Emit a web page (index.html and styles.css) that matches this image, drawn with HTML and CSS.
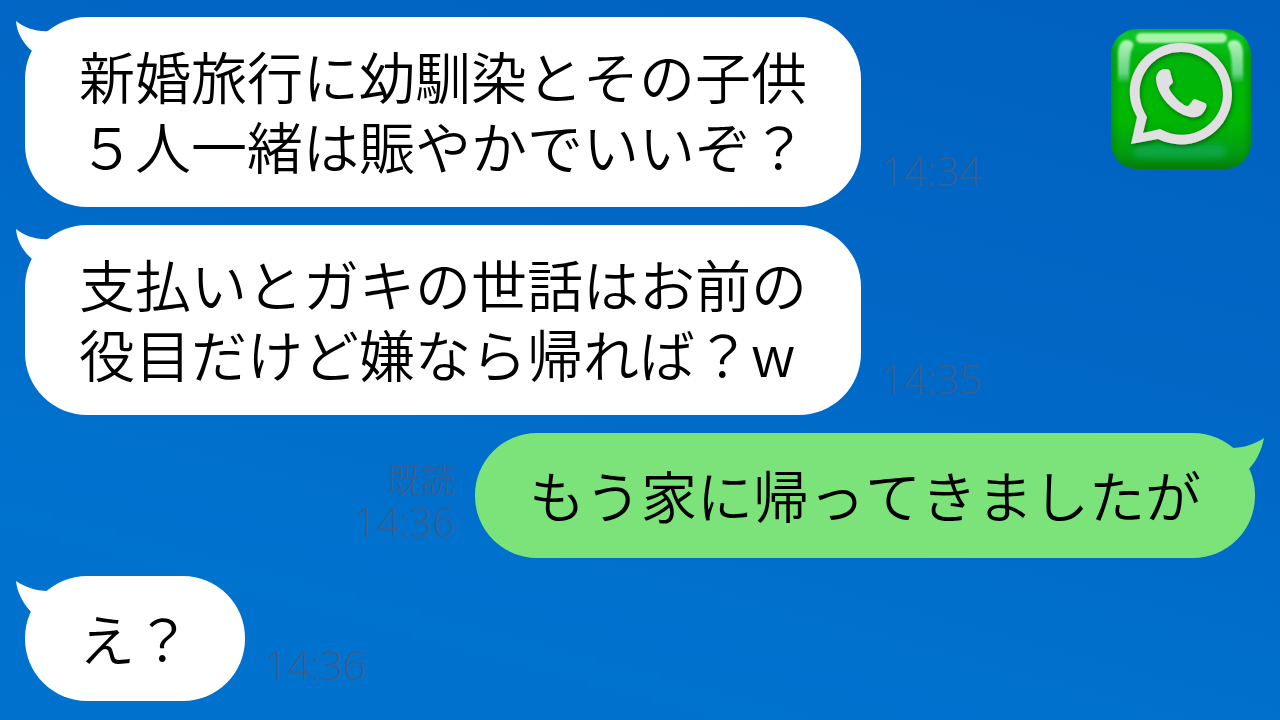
FILE: index.html
```html
<!DOCTYPE html>
<html lang="ja">
<head>
<meta charset="utf-8">
<meta name="viewport" content="width=device-width, initial-scale=1">
<title>トーク</title>
<link rel="stylesheet" href="styles.css">
</head>
<body>
<main class="chat">
  <article class="message">
    <div class="bubble">
      <svg class="tail" viewBox="0 0 44 44" aria-hidden="true"><path d="M0 0C9 7 20 11 34 10L44 20L30 44L16 30C7 22 1 12 0 0Z"/></svg>
      <p class="text">新婚旅行に幼馴染とその子供<br>５人一緒は賑やかでいいぞ？</p>
    </div>
    <div class="meta"><time>14:34</time></div>
  </article>
  <article class="message">
    <div class="bubble">
      <svg class="tail" viewBox="0 0 44 44" aria-hidden="true"><path d="M0 0C9 7 20 11 34 10L44 20L30 44L16 30C7 22 1 12 0 0Z"/></svg>
      <p class="text">支払いとガキの世話はお前の<br>役目だけど嫌なら帰れば？w</p>
    </div>
    <div class="meta"><time>14:35</time></div>
  </article>
  <article class="message message-own">
    <div class="bubble">
      <svg class="tail" viewBox="0 0 44 44" aria-hidden="true"><path d="M44 1C35 7 24 11 11 11L0 20L14 44L29 32C37 23 42 12 44 1Z"/></svg>
      <p class="text">もう家に帰ってきましたが</p>
    </div>
    <div class="meta"><span class="read">既読</span><time>14:36</time></div>
  </article>
  <article class="message">
    <div class="bubble">
      <svg class="tail" viewBox="0 0 44 44" aria-hidden="true"><path d="M0 1C9 7 20 11 32 11L44 20L30 44L15 32C7 23 1 12 0 1Z"/></svg>
      <p class="text">え？</p>
    </div>
    <div class="meta"><time>14:36</time></div>
  </article>
</main>
<svg class="app-icon" viewBox="0 0 140 140" role="img" aria-label="WhatsApp">
  <defs>
    <linearGradient id="face" x1="0" y1="0" x2="0" y2="1">
      <stop offset="0" stop-color="#10b01c"/>
      <stop offset=".04" stop-color="#0cc828"/>
      <stop offset=".2" stop-color="#00b50c"/>
      <stop offset=".65" stop-color="#00b802"/>
      <stop offset=".88" stop-color="#009c10"/>
      <stop offset="1" stop-color="#087b08"/>
    </linearGradient>
    <linearGradient id="side" x1="0" y1="0" x2="1" y2="0">
      <stop offset="0" stop-color="#046c14" stop-opacity=".4"/>
      <stop offset=".06" stop-color="#046c14" stop-opacity="0"/>
      <stop offset=".94" stop-color="#046c14" stop-opacity="0"/>
      <stop offset="1" stop-color="#046c14" stop-opacity=".4"/>
    </linearGradient>
    <linearGradient id="shine" x1="0" y1="0" x2="0" y2="1">
      <stop offset="0" stop-color="#b5f5b8"/>
      <stop offset=".8" stop-color="#70d690" stop-opacity=".9"/>
      <stop offset="1" stop-color="#40c060" stop-opacity=".4"/>
    </linearGradient>
    <filter id="soft" x="-30%" y="-60%" width="160%" height="220%"><feGaussianBlur stdDeviation="1"/></filter>
    <filter id="glow" x="-30%" y="-100%" width="160%" height="300%"><feGaussianBlur stdDeviation="4"/></filter>
    <filter id="shadow" x="-20%" y="-20%" width="140%" height="140%"><feDropShadow dx="1" dy="2" stdDeviation="2" flood-color="#035a08" flood-opacity=".8"/></filter>
  </defs>
  <rect width="140" height="140" rx="26" fill="url(#face)"/>
  <rect width="140" height="140" rx="26" fill="url(#side)"/>
  <rect x="22" y="116" width="94" height="12" rx="6" fill="#08a850" filter="url(#glow)"/>
  <rect x="25" y="4" width="91" height="10" rx="5" fill="#a9f3a8" filter="url(#soft)"/>
  <path d="M7 53V24Q8 11 16 11Q25 12 21 20Q18 25 18 53Z" fill="url(#shine)" filter="url(#soft)"/>
  <path d="M132 53V24Q131 11 123 11Q114 12 118 20Q121 25 121 53Z" fill="url(#shine)" filter="url(#soft)"/>
  <g filter="url(#shadow)" fill="#e2dfe2">
    <path fill-rule="evenodd" d="M20 115L26 88C6 55 30 14 70 14C99 14 121 37 121 65C121 102 82 127 47 110ZM32 104L49 100C80 117 112 94 112 65C112 41 93 23 70 23C37 23 17 58 36 88Z"/>
    <path d="M53 40C48 41 45 45 45 50C46 67 62 84 79 88C84 89 89 88 92 84C95 80 97 76 94 74L84 70C81 70 79 77 76 77C71 76 60 65 58 59C58 56 62 55 62 53L59 42C58 40 56 40 53 40Z"/>
  </g>
</svg>
</body>
</html>
```
FILE: styles.css
```css
* {
  box-sizing: border-box;
}

body {
  margin: 0;
  min-height: 100vh;
  position: relative;
  background: linear-gradient(195deg, #0060bf 0%, #0069c7 45%, #0073cf 80%, #0071cd 100%);
  font-family: "Noto Sans CJK JP", "Noto Sans", sans-serif;
  font-kerning: none;
  color: #000;
}

.chat {
  display: flex;
  flex-direction: column;
  gap: 18px;
  padding: 17px 25px 19px;
}

.message {
  display: flex;
  align-items: flex-end;
  gap: 20px;
}

.message-own {
  flex-direction: row-reverse;
}

.bubble {
  position: relative;
  display: flex;
  align-items: center;
  min-height: 125px;
  padding: 23px 54px 27px;
  border-radius: 62px;
  background: #fff;
}

.message-own .bubble {
  background: #7ce37a;
}

.text {
  margin: 0;
  font-size: 56px;
  font-weight: 350;
  line-height: 70px;
}

.tail {
  position: absolute;
  top: 4px;
  left: -9px;
  width: 44px;
  height: 44px;
  fill: #fff;
}

.message-own .tail {
  left: auto;
  right: -9px;
  fill: #7ce37a;
}

.meta {
  display: flex;
  flex-direction: column;
  align-items: flex-end;
  padding-bottom: 15px;
  font-family: "Open Sans", "Noto Sans CJK JP", sans-serif;
  font-size: 40px;
  font-weight: 300;
  line-height: 42px;
  color: #365f90;
}

.read {
  font-size: 34px;
}

.app-icon {
  position: absolute;
  top: 29px;
  right: 29px;
  width: 140px;
  height: 140px;
}
```
